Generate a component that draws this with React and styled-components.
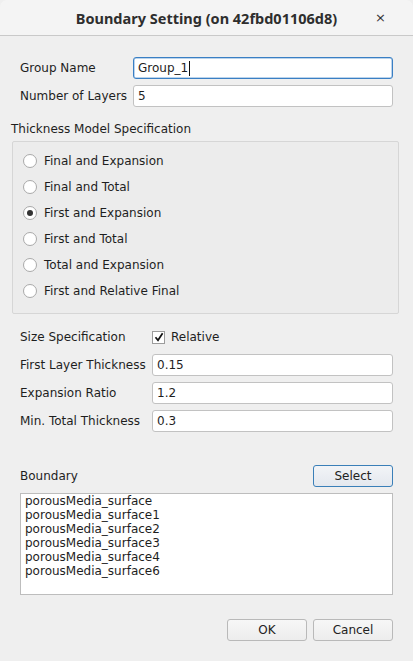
import React from "react";
import styled, { createGlobalStyle } from "styled-components";

const Global = createGlobalStyle`
  html, body { margin: 0; padding: 0; background: #efefef; }
  body { font-family: "DejaVu Sans", "Liberation Sans", sans-serif; font-size: 12px; color: #1e1e1e; }
  * { box-sizing: border-box; }
`;

const Window = styled.div`
  width: 413px;
  height: 661px;
  background: #efefef;
  display: flex;
  flex-direction: column;
  border-radius: 7px 7px 0 0;
  overflow: hidden;
`;

const TitleBar = styled.div`
  height: 36px;
  flex: none;
  background: #f4f4f4;
  border-bottom: 1px solid #c9c9c9;
  display: flex;
  align-items: center;
  justify-content: center;
  position: relative;
`;

const Title = styled.div`
  font-family: "Noto Sans", "DejaVu Sans", sans-serif;
  font-weight: 700;
  font-size: 14.5px;
  color: #2e2e2e;
  margin-top: 0px;
`;

const Close = styled.div`
  position: absolute;
  right: 27px;
  top: 11px;
  font-size: 13px;
  color: #333;
  line-height: 1;
`;

const Body = styled.div`
  flex: 1;
  display: flex;
  flex-direction: column;
  padding: 21px 20px 0 20px;
`;

const FormGrid = styled.div`
  display: grid;
  grid-template-columns: ${(p) => p.$label}px 1fr;
  row-gap: 6px;
  align-items: center;
`;

const Label = styled.div`
  line-height: 22px;
  white-space: nowrap;
`;

const Input = styled.div`
  height: 22px;
  background: #fff;
  border: 1px solid ${(p) => (p.$focus ? "#3a7fc4" : "#c2c2c2")};
  border-radius: 3px;
  padding: 0 4px;
  line-height: 20px;
  display: flex;
  align-items: center;
  ${(p) => p.$focus && "box-shadow: inset 0 0 0 0.5px #7aa9d8;"}
`;

const Caret = styled.span`
  display: inline-block;
  width: 1px;
  height: 15px;
  background: #111;
  margin-left: 1px;
`;

const SectionTitle = styled.div`
  margin: 14px 0 0 -9px;
  line-height: 16px;
`;

const GroupBox = styled.div`
  margin: 4px 0 0 -8px;
  width: 387px;
  height: 173px;
  border: 1px solid #d6d6d6;
  border-radius: 2px;
  background: #ececec;
  padding: 6px 0 0 10px;
  display: flex;
  flex-direction: column;
`;

const RadioRow = styled.div`
  height: 26px;
  display: flex;
  align-items: center;
  gap: 7px;
`;

const RadioCircle = styled.span`
  width: 14px;
  height: 14px;
  border-radius: 50%;
  border: 1px solid #a9a9a9;
  background: #fff;
  display: flex;
  align-items: center;
  justify-content: center;
  &::after {
    content: "";
    width: 6px;
    height: 6px;
    border-radius: 50%;
    background: ${(p) => (p.$on ? "#333" : "transparent")};
  }
`;

const SizeGrid = styled(FormGrid)`
  margin-top: 12px;
`;

const CheckWrap = styled.div`
  display: flex;
  align-items: center;
  gap: 6px;
  height: 22px;
`;

const CheckBox = styled.span`
  width: 13px;
  height: 13px;
  border: 1px solid #9c9c9c;
  background: #fff;
  display: flex;
  align-items: center;
  justify-content: center;
`;

const BoundaryHead = styled.div`
  margin-top: 33px;
  display: flex;
  justify-content: space-between;
  align-items: center;
`;

const Button = styled.div`
  width: 80px;
  height: 22px;
  border: 1px solid ${(p) => (p.$default ? "#3a7fb8" : "#b9b9b9")};
  border-radius: 3px;
  background: ${(p) => (p.$default ? "linear-gradient(#f2f4f7, #e4e8ee)" : "linear-gradient(#f7f7f7, #ededed)")};
  display: flex;
  align-items: center;
  justify-content: center;
  color: #222;
`;

const List = styled.div`
  margin-top: 6px;
  height: 102px;
  background: #fff;
  border: 1px solid #bdbdbd;
  padding: 0 4px;
  display: flex;
  flex-direction: column;
`;

const ListItem = styled.div`
  line-height: 14px;
`;

const Footer = styled.div`
  margin-top: 24px;
  display: flex;
  justify-content: flex-end;
  gap: 6px;
`;

const radios = [
  "Final and Expansion",
  "Final and Total",
  "First and Expansion",
  "First and Total",
  "Total and Expansion",
  "First and Relative Final",
];

const items = [
  "porousMedia_surface",
  "porousMedia_surface1",
  "porousMedia_surface2",
  "porousMedia_surface3",
  "porousMedia_surface4",
  "porousMedia_surface6",
];

export default function App() {
  return (
    <>
      <Global />
      <Window>
        <TitleBar>
          <Title>Boundary Setting (on 42fbd01106d8)</Title>
          <Close>×</Close>
        </TitleBar>
        <Body>
          <FormGrid $label={113}>
            <Label>Group Name</Label>
            <Input $focus>
              Group_1<Caret />
            </Input>
            <Label>Number of Layers</Label>
            <Input>5</Input>
          </FormGrid>
          <SectionTitle>Thickness Model Specification</SectionTitle>
          <GroupBox>
            {radios.map((r, i) => (
              <RadioRow key={r}>
                <RadioCircle $on={i === 2} />
                <span>{r}</span>
              </RadioRow>
            ))}
          </GroupBox>
          <SizeGrid $label={132}>
            <Label>Size Specification</Label>
            <CheckWrap>
              <CheckBox>
                <svg width="10" height="10" viewBox="0 0 10 10">
                  <path d="M1.5 5.2 L4 8.3 L8.6 1.2" fill="none" stroke="#111" strokeWidth="1.7" />
                </svg>
              </CheckBox>
              <span>Relative</span>
            </CheckWrap>
            <Label>First Layer Thickness</Label>
            <Input>0.15</Input>
            <Label>Expansion Ratio</Label>
            <Input>1.2</Input>
            <Label>Min. Total Thickness</Label>
            <Input>0.3</Input>
          </SizeGrid>
          <BoundaryHead>
            <Label>Boundary</Label>
            <Button $default>Select</Button>
          </BoundaryHead>
          <List>
            {items.map((t) => (
              <ListItem key={t}>{t}</ListItem>
            ))}
          </List>
          <Footer>
            <Button>OK</Button>
            <Button>Cancel</Button>
          </Footer>
        </Body>
      </Window>
    </>
  );
}
